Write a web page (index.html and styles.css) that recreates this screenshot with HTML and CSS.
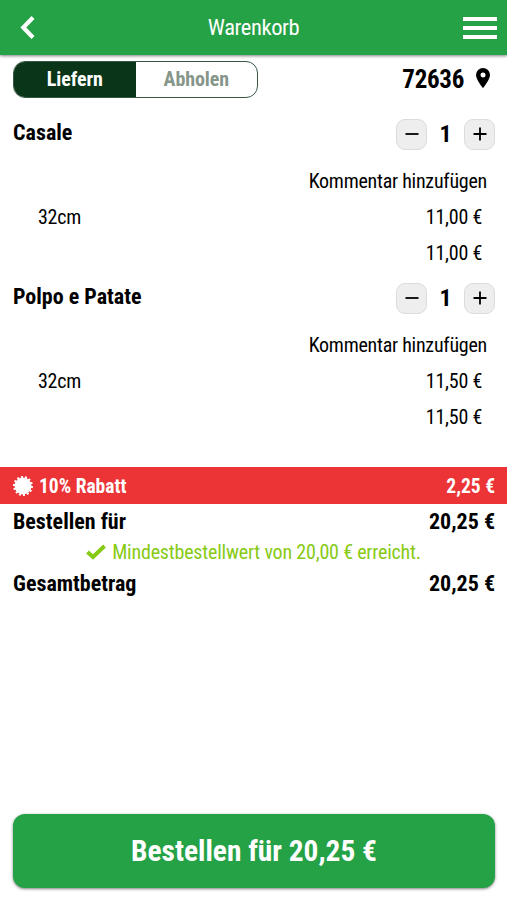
FILE: index.html
```html
<!DOCTYPE html>
<html lang="de">
<head>
    <meta charset="UTF-8">
    <title>Warenkorb</title>
    <meta name="viewport" content="width=device-width, initial-scale=1">
    <link rel="stylesheet" href="styles.css">
</head>
<body>
    <header class="header">
        <svg class="back" viewBox="0 0 14 22"><path d="M12.300 1.500 L3 11 L12.300 20.500"/></svg>
        <h1><span class="text">Warenkorb</span></h1>
        <div class="menu"><span></span><span></span><span></span></div>
    </header>

    <main class="cart">
        <div class="delivery">
            <div class="toggle">
                <div class="option active"><span class="text">Liefern</span></div>
                <div class="option"><span class="text">Abholen</span></div>
            </div>
            <div class="zip">
                <span class="text">72636</span>
                <svg viewBox="0 0 14 20"><path fill-rule="evenodd" d="M7 0a7 7 0 0 0-7 7c0 4.800 7 13 7 13s7-8.200 7-13a7 7 0 0 0-7-7zm0 4.500a2.500 2.500 0 1 1 0 5 2.500 2.500 0 0 1 0-5z"/></svg>
            </div>
        </div>

        <div class="item">
            <div class="item-head">
                <h2><span class="text">Casale</span></h2>
                <div class="amount">
                    <button class="step"><svg viewBox="0 0 14 14"><path d="M.5 7h13"/></svg></button>
                    <span class="count text">1</span>
                    <button class="step"><svg viewBox="0 0 14 14"><path d="M.5 7h13M7 .5v13"/></svg></button>
                </div>
            </div>
            <div class="row comment"><span class="text">Kommentar hinzufügen</span></div>
            <div class="row"><span class="text">32cm</span><span class="text">11,00 €</span></div>
            <div class="row sum"><span class="text">11,00 €</span></div>
        </div>

        <div class="item">
            <div class="item-head">
                <h2><span class="text">Polpo e Patate</span></h2>
                <div class="amount">
                    <button class="step"><svg viewBox="0 0 14 14"><path d="M.5 7h13"/></svg></button>
                    <span class="count text">1</span>
                    <button class="step"><svg viewBox="0 0 14 14"><path d="M.5 7h13M7 .5v13"/></svg></button>
                </div>
            </div>
            <div class="row comment"><span class="text">Kommentar hinzufügen</span></div>
            <div class="row"><span class="text">32cm</span><span class="text">11,50 €</span></div>
            <div class="row sum"><span class="text">11,50 €</span></div>
        </div>

        <div class="discount">
            <svg viewBox="0 0 20 20"><circle cx="10" cy="10" r="8.500"/><circle class="teeth" cx="10" cy="10" r="9" pathLength="36"/></svg>
            <span class="text">10% Rabatt</span>
            <span class="value text">2,25 €</span>
        </div>
        <div class="total"><span class="text">Bestellen für</span><span class="text">20,25 €</span></div>
        <div class="minimum">
            <svg viewBox="0 0 20 16"><path d="M1.500 8 L7 13 L18.500 2"/></svg>
            <span class="text">Mindestbestellwert von 20,00 € erreicht.</span>
        </div>
        <div class="total"><span class="text">Gesamtbetrag</span><span class="text">20,25 €</span></div>
    </main>

    <footer class="footer">
        <button class="order"><span class="text">Bestellen für 20,25 €</span></button>
    </footer>
</body>
</html>
```
FILE: styles.css
```css
* { box-sizing: border-box; }
body { margin: 0; height: 900px; display: flex; flex-direction: column; background: #fff; color: #000; font-family: "Roboto Condensed", Roboto, sans-serif; font-stretch: 75%; font-size: 20px; line-height: 1.2; }
h1, h2 { margin: 0; }
button { font: inherit; font-stretch: 75%; padding: 0; }
.text { white-space: nowrap; }

.header { height: 55px; flex: none; padding: 0 10px 0 20px; display: grid; grid-template-columns: 80px 1fr 80px; align-items: center; background: #25a146; color: #fff; box-shadow: 0 1px 3px rgba(0, 0, 0, 0.5); }
.header h1 { font-size: 22.5px; font-weight: 450; letter-spacing: -0.4px; text-align: center; padding-right: 10px; }
.back { width: 15px; height: 23px; fill: none; stroke: #fff; stroke-width: 4; }
.menu { display: flex; flex-direction: column; gap: 5px; width: 34px; justify-self: end; }
.menu span { height: 4px; background: #fff; }

.cart { flex: 1; }
.delivery { display: flex; justify-content: space-between; align-items: center; height: 37px; margin: 6px 17px 18px 13px; }
.toggle { display: flex; width: 245px; height: 37px; border: 1px solid #395743; border-radius: 12px; overflow: hidden; }
.option { flex: 1; display: flex; align-items: center; justify-content: center; padding-bottom: 1px; font-weight: 700; letter-spacing: -0.1px; color: #87968b; }
.option.active { background: #0b3518; color: #fff; }
.zip { display: flex; align-items: center; gap: 12px; font-size: 25px; font-weight: 700; letter-spacing: -0.3px; }
.zip svg { width: 14px; height: 20px; margin-bottom: 3px; }

.item { margin-bottom: 9px; }
.item-head { display: flex; justify-content: space-between; height: 36px; padding: 0 12px 0 13px; margin-bottom: 11px; align-items: center; }
.item-head h2 { font-size: 22px; font-weight: 700; padding-bottom: 2px; }
.amount { display: flex; align-items: center; }
.step { width: 31px; height: 31px; display: flex; align-items: center; justify-content: center; background: #eee; border: 1px solid #dcdcdc; border-radius: 9px; }
.step svg { width: 14px; height: 14px; stroke: #000; stroke-width: 1.8; }
.count { width: 37px; text-align: center; font-size: 24px; font-weight: 700; }
.row { display: flex; justify-content: space-between; align-items: center; height: 36px; padding: 0 25px 0 38px; font-weight: 450; letter-spacing: -0.25px; }
.row.comment { justify-content: flex-end; padding-right: 20px; }
.row.sum { justify-content: flex-end; }

.discount { display: flex; align-items: center; height: 37px; margin-top: 32px; padding: 2px 12px 0 13px; background: #ec3336; color: #fff; font-size: 19.5px; font-weight: 700; }
.discount svg { width: 20px; height: 20px; margin: 0 6px 2px 0; fill: #fff; }
.discount .teeth { fill: none; stroke: #fff; stroke-width: 2; stroke-dasharray: 1.3 1.27; }
.discount .value { margin-left: auto; }
.total { display: flex; justify-content: space-between; align-items: center; height: 34px; padding: 2px 12px 0 13px; font-size: 22px; font-weight: 700; }
.minimum { display: flex; align-items: center; justify-content: center; gap: 6px; height: 28px; color: #87ca14; letter-spacing: -0.2px; }
.minimum svg { width: 20px; height: 16px; fill: none; stroke: #87ca14; stroke-width: 4; }

.footer { flex: none; padding: 0 12px 12px 13px; }
.order { display: block; width: 100%; height: 74px; padding-top: 1px; border: none; border-radius: 12px; background: #25a146; color: #fff; font-size: 29.4px; font-weight: 700; box-shadow: 0 1px 3px rgba(0, 0, 0, 0.5); }
```
